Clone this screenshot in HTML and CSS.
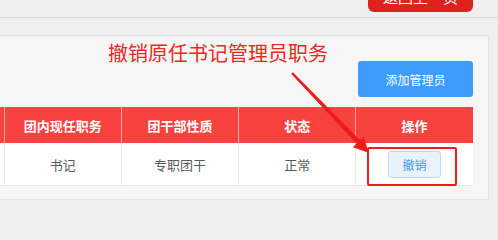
FILE: index.html
```html
<!DOCTYPE html>
<html lang="zh-CN">
<head>
<meta charset="utf-8">
<link rel="stylesheet" href="styles.css">
</head>
<body>
<div class="page">
  <div class="topbar">
    <button class="back-btn">返回上一页</button>
  </div>
  <div class="card">
    <div class="toolbar">
      <button class="add-btn">添加管理员</button>
    </div>
    <table class="grid">
      <colgroup>
        <col class="c"><col class="c"><col class="c"><col class="c"><col class="c">
      </colgroup>
      <thead>
        <tr><th></th><th>团内现任职务</th><th>团干部性质</th><th>状态</th><th>操作</th></tr>
      </thead>
      <tbody>
        <tr><td></td><td>书记</td><td>专职团干</td><td>正常</td><td><button class="revoke-btn">撤销</button></td></tr>
      </tbody>
    </table>
  </div>

  <div class="note">撤销原任书记管理员职务</div>
  <div class="highlight"></div>
  <svg class="arrow" width="498" height="231" viewBox="0 0 498 231">
    <polygon fill="#f01b1b" points="292.9,72.2 360.1,140.2 363.8,136.6 368.6,152.7 352.8,147.2 356.5,143.6 291.1,73.8"/>
  </svg>
</div>
</body>
</html>
```

FILE: styles.css
```css
html, body {
  margin: 0;
  padding: 0;
}
body {
  background: #efefef;
  font-family: "Noto Sans CJK SC", "Noto Sans", sans-serif;
  overflow: hidden;
  width: 498px;
  height: 231px;
}
.page {
  position: relative;
  width: 498px;
  height: 231px;
  overflow: hidden;
}
.topbar {
  height: 17px;
  border-bottom: 1px solid #d6d6d6;
  display: flex;
  justify-content: flex-end;
  padding-right: 25px;
}
.back-btn {
  margin-top: -20px;
  width: 105px;
  height: 32px;
  border: none;
  border-radius: 6px;
  background: #e0221f;
  color: #fff;
  font-family: inherit;
  font-size: 15px;
  padding: 0;
}
.card {
  margin: 17px 9px 0 -130px;
  border: 1px solid #e2e2e2;
  background: #f6f6f6;
  padding: 25px 15px 13px 16px;
}
.toolbar {
  display: flex;
  justify-content: flex-end;
  margin-bottom: 10px;
}
.add-btn {
  width: 115px;
  height: 36px;
  border: none;
  border-radius: 3px;
  background: #3e9dfc;
  color: #fff;
  font-family: inherit;
  font-size: 12px;
  padding: 0;
}
.grid {
  width: 586px;
  border-collapse: collapse;
  table-layout: fixed;
}
.grid th {
  height: 36px;
  padding: 0;
  background: #f7423f;
  color: #fff;
  font-size: 13px;
  font-weight: bold;
  text-align: center;
  border-right: 1px solid rgba(255,255,255,0.55);
}
.grid th:last-child {
  border-right: none;
}
.grid td {
  height: 42px;
  padding: 0;
  background: #fff;
  color: #5a5a5a;
  font-size: 13px;
  text-align: center;
  border-right: 1px solid #ececec;
  border-bottom: 1px solid #e8e8e8;
}
.grid td:last-child {
  border-right: none;
}
.revoke-btn {
  width: 53px;
  height: 27px;
  border: 1px solid #b9dafc;
  border-radius: 3px;
  background: #e9f3fe;
  color: #3f9af5;
  font-family: inherit;
  font-size: 12px;
  padding: 0;
  vertical-align: middle;
}
.note {
  position: absolute;
  left: 108px;
  top: 39px;
  font-size: 20px;
  line-height: 28px;
  color: #ea2a24;
  white-space: nowrap;
}
.highlight {
  position: absolute;
  left: 367px;
  top: 147px;
  width: 86px;
  height: 35px;
  border: 2px solid #eb1c1c;
  border-radius: 2px;
}
.arrow {
  position: absolute;
  left: 0;
  top: 0;
}
```
